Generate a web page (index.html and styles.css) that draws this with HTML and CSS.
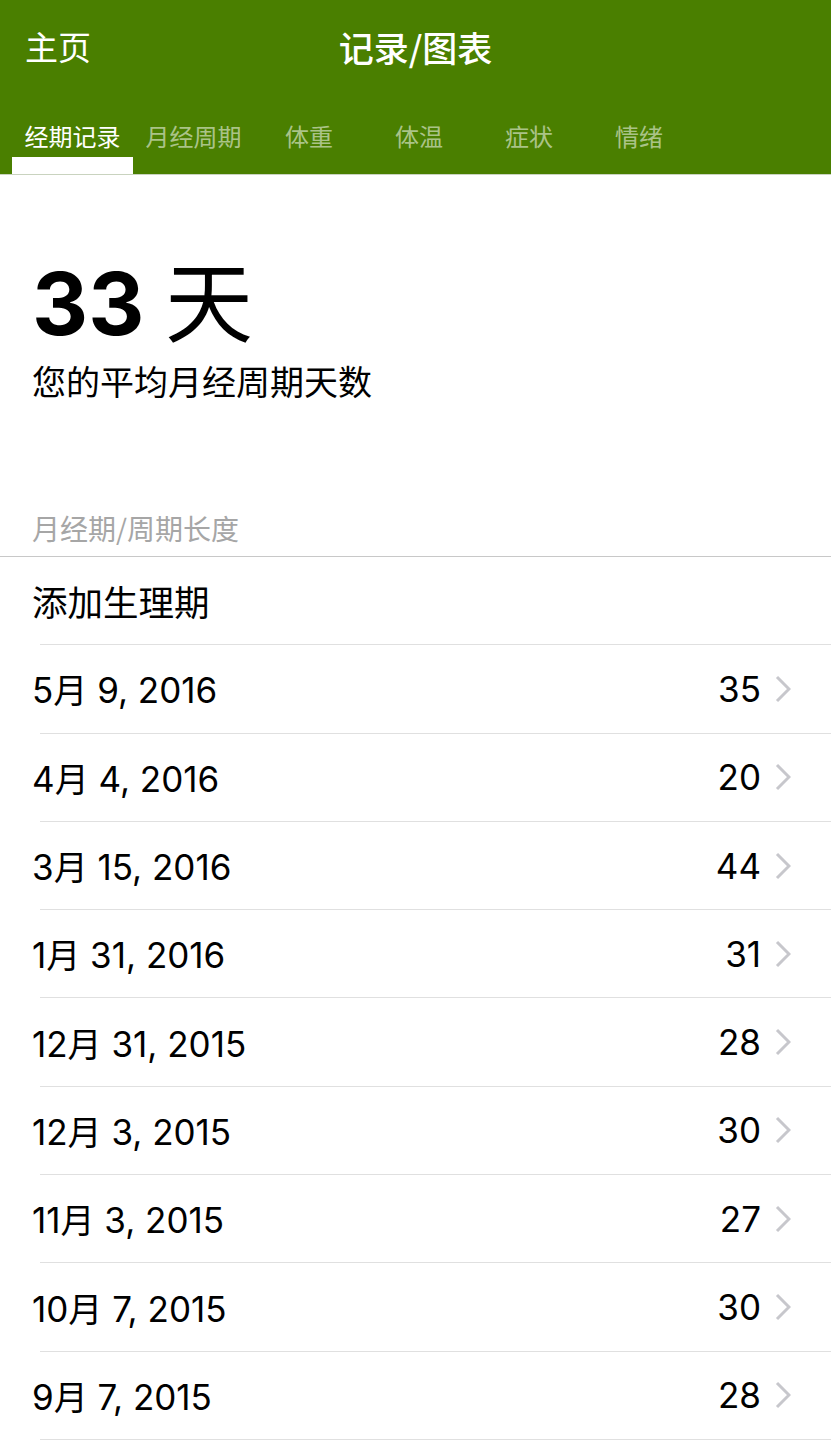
FILE: index.html
```html
<!DOCTYPE html>
<html lang="zh-CN">
<head>
    <meta charset="UTF-8">
    <meta name="viewport" content="width=device-width, initial-scale=1.0">
    <title>记录/图表</title>
    <link rel="stylesheet" href="styles.css">
</head>
<body>
    <header class="appbar">
        <div class="topbar">
            <span class="home">主页</span>
            <span class="title">记录/图表</span>
            <span></span>
        </div>
        <nav class="tabs">
            <div class="tab active"><span>经期记录</span><i></i></div>
            <div class="tab"><span>月经周期</span><i></i></div>
            <div class="tab"><span>体重</span><i></i></div>
            <div class="tab"><span>体温</span><i></i></div>
            <div class="tab"><span>症状</span><i></i></div>
            <div class="tab"><span>情绪</span><i></i></div>
        </nav>
    </header>

    <section class="summary">
        <div class="big">33 <span class="cjk">天</span></div>
        <div class="caption">您的平均月经周期天数</div>
    </section>

    <div class="section-head">月经期/周期长度</div>

    <ul class="list">
        <li class="row add"><span class="date">添加生理期</span></li>
        <li class="row"><span class="date">5<span class="cjk">月</span> 9, 2016</span><span class="num">35</span><span class="chev"></span></li>
        <li class="row"><span class="date">4<span class="cjk">月</span> 4, 2016</span><span class="num">20</span><span class="chev"></span></li>
        <li class="row"><span class="date">3<span class="cjk">月</span> 15, 2016</span><span class="num">44</span><span class="chev"></span></li>
        <li class="row"><span class="date">1<span class="cjk">月</span> 31, 2016</span><span class="num">31</span><span class="chev"></span></li>
        <li class="row"><span class="date">12<span class="cjk">月</span> 31, 2015</span><span class="num">28</span><span class="chev"></span></li>
        <li class="row"><span class="date">12<span class="cjk">月</span> 3, 2015</span><span class="num">30</span><span class="chev"></span></li>
        <li class="row"><span class="date">11<span class="cjk">月</span> 3, 2015</span><span class="num">27</span><span class="chev"></span></li>
        <li class="row"><span class="date">10<span class="cjk">月</span> 7, 2015</span><span class="num">30</span><span class="chev"></span></li>
        <li class="row"><span class="date">9<span class="cjk">月</span> 7, 2015</span><span class="num">28</span><span class="chev"></span></li>
    </ul>

    <template id="chevron">
        <svg width="16" height="28" viewBox="0 0 16 28"><path d="M2 2 L14 14 L2 26" fill="none" stroke="#c7c7cc" stroke-width="3"/></svg>
    </template>
    <script>
        const tpl = document.getElementById('chevron');
        document.querySelectorAll('.chev').forEach(el => {
            el.appendChild(tpl.content.cloneNode(true));
        });
    </script>
</body>
</html>
```

FILE: styles.css
```css
body {
    margin: 0;
    font-family: 'Inter', 'Noto Sans CJK SC', sans-serif;
    background: #fff;
    color: #000;
}
.cjk {
    font-family: 'Noto Sans CJK SC', sans-serif;
}
.appbar {
    background: #4a7f00;
    color: #fff;
    font-family: 'Noto Sans CJK SC', sans-serif;
    border-bottom: 1px solid #c9d3bf;
}
.topbar {
    height: 92px;
    display: grid;
    grid-template-columns: 1fr auto 1fr;
    align-items: center;
    padding: 0 25px;
}
.home {
    font-size: 33px;
    line-height: 1;
}
.title {
    font-size: 35px;
    font-weight: 500;
    line-height: 1;
}
.tabs {
    height: 82px;
    display: flex;
    padding-left: 12px;
}
.tab {
    min-width: 110px;
    padding: 0 12.5px;
    box-sizing: border-box;
    display: flex;
    flex-direction: column;
    justify-content: flex-end;
    align-items: center;
    color: rgba(255, 255, 255, 0.55);
    font-size: 24px;
    line-height: 30px;
}
.tab span {
    margin-bottom: 6px;
}
.tab i {
    display: block;
    align-self: stretch;
    margin: 0 -12.5px;
    height: 17px;
}
.tab.active {
    color: #fff;
}
.tab.active i {
    background: #fff;
}
.summary {
    padding: 77px 32px 0;
    height: 315px;
    box-sizing: border-box;
}
.big {
    font-size: 87px;
    font-weight: bold;
    line-height: 90px;
}
.big .cjk {
    font-weight: 400;
    font-size: 88px;
}
.caption {
    font-family: 'Noto Sans CJK SC', sans-serif;
    font-size: 34px;
    line-height: 40px;
    margin-top: 12px;
}
.section-head {
    font-family: 'Noto Sans CJK SC', sans-serif;
    font-size: 28px;
    color: #a6a6a6;
    padding: 0 32px;
    height: 66px;
    line-height: 76px;
    border-bottom: 1.5px solid #c8c8c8;
}
.list {
    list-style: none;
    margin: 0;
    padding: 0 0 0 40px;
}
.row {
    height: 88.3px;
    box-sizing: border-box;
    display: flex;
    align-items: center;
    padding-right: 40px;
    font-size: 35px;
    border-bottom: 1.5px solid #e0e0e0;
}
.row .cjk {
    font-size: 34px;
}
.row.add {
    font-family: 'Noto Sans CJK SC', sans-serif;
    font-size: 35.5px;
}
.date {
    flex: 1;
    margin-left: -8px;
}
.num {
    margin-right: 14px;
}
.chev {
    display: flex;
}
```
